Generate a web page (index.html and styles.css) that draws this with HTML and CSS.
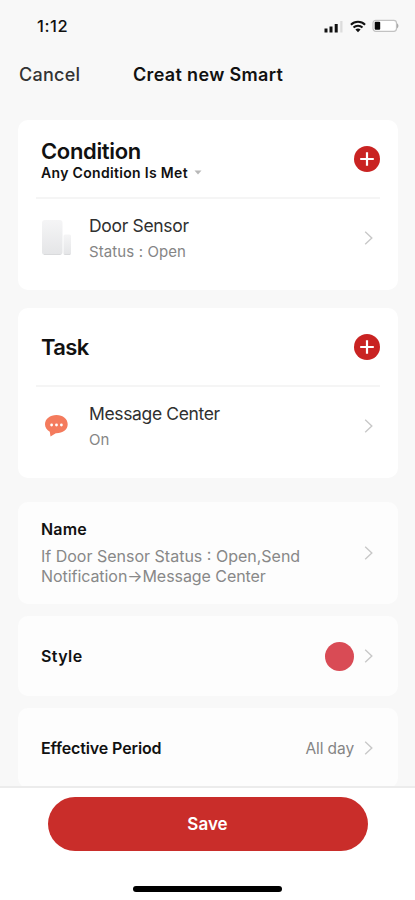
FILE: index.html
```html
<!DOCTYPE html>
<html lang="en">
<head>
<meta charset="utf-8">
<title>Creat new Smart</title>
<link rel="stylesheet" href="styles.css">
</head>
<body>
<svg class="defs" width="0" height="0">
  <symbol id="chevron" viewBox="0 0 10 16"><path d="M1.2 1.8 7.8 8 1.2 14.2" fill="none" stroke="#c8c8c8" stroke-width="1.4"/></symbol>
  <symbol id="plus" viewBox="0 0 26 26"><circle cx="13" cy="13" r="13" fill="#c92322"/><path d="M13 6.2v13.6M6.2 13h13.6" stroke="#fff" stroke-width="2.2"/></symbol>
</svg>
<div class="screen">
  <div class="status">
    <span class="time">1:12</span>
    <div class="indicators">
      <svg width="20" height="14" viewBox="0 0 20 14"><path d="M.5 9.5h3v4h-3zM5.5 7.5h3v6h-3zM10.7 5h3v8.500h-3z" fill="#111"/><path d="M16.200 2h2.300v11.500h-2.300z" fill="#dcdcdc"/></svg>
      <svg width="16" height="13" viewBox="0 0 16 13"><g fill="none" stroke="#111" stroke-width="2"><path d="M.9 4.7a10.2 10.2 0 0 1 14.2 0"/><path d="M3.5 7.5a6.4 6.4 0 0 1 9 0"/></g><path d="M8 12.2 5.4 9.6a3.8 3.8 0 0 1 5.2 0z" fill="#111"/></svg>
      <svg width="28" height="14" viewBox="0 0 28 14"><rect x="1" y="1.3" width="23.5" height="11" rx="2.8" fill="#fff" stroke="#c2c2c2" stroke-width="1.2"/><rect x="2.7" y="2.8" width="5.5" height="8" rx="1" fill="#080808"/><path d="M25.2 4.2q2.4 2.600 0 5.200z" fill="#999"/></svg>
    </div>
  </div>
  <header class="nav">
    <span class="cancel">Cancel</span>
    <span class="title">Creat new Smart</span>
  </header>
  <main class="content">
    <section class="card">
      <div class="card-head">
        <div>
          <h2 class="condition">Condition</h2>
          <div class="match"><span>Any Condition Is Met</span><svg width="8" height="5" viewBox="0 0 8 5"><path d="M.5.5h7L4 4.5z" fill="#b8b8b8"/></svg></div>
        </div>
        <svg class="plus"><use href="#plus"/></svg>
      </div>
      <div class="item">
        <svg class="pic" width="32" height="38" viewBox="0 0 32 38">
          <defs><linearGradient id="body" x2="0" y2="1"><stop stop-color="#f5f5f6"/><stop offset="1" stop-color="#e4e5e7"/></linearGradient></defs>
          <rect x="1" y="1" width="20.500" height="35" rx="3" fill="url(#body)"/><path d="M3 35.5h16.500" stroke="#d9dadc"/>
          <rect x="22.5" y="15.5" width="7.500" height="20.5" rx="1.5" fill="url(#body)"/><path d="M23.5 35.5h5.500" stroke="#d9dadc"/>
        </svg>
        <div class="text"><div class="name door">Door Sensor</div><div class="sub state">Status : Open</div></div>
        <svg class="chev"><use href="#chevron"/></svg>
      </div>
    </section>
    <section class="card task-card">
      <div class="card-head">
        <h2 class="task">Task</h2>
        <svg class="plus"><use href="#plus"/></svg>
      </div>
      <div class="item">
        <svg class="pic" width="32" height="38" viewBox="0 0 32 38"><path d="M15.500 8C9 8 4 12 4 17.300c0 3.300 1.800 5.800 4.800 7.400L9.500 29.500l5.300-3.200C21.600 26.500 26.700 22.700 26.700 17.300 26.700 12 22 8 15.500 8z" fill="#f47b5d"/><g fill="#fff"><circle cx="10.6" cy="18" r="1.4"/><circle cx="15.500" cy="18" r="1.4"/><circle cx="20.400" cy="18" r="1.4"/></g></svg>
        <div class="text"><div class="name message">Message Center</div><div class="sub">On</div></div>
        <svg class="chev"><use href="#chevron"/></svg>
      </div>
    </section>
    <section class="row name-row">
      <div><h3 class="label">Name</h3><p class="desc">If Door Sensor Status : Open,Send<br><span class="second">Notification→Message Center</span></p></div>
      <svg class="chev"><use href="#chevron"/></svg>
    </section>
    <section class="row style-row">
      <h3 class="label style">Style</h3>
      <div class="value"><i class="swatch"></i><svg class="chev"><use href="#chevron"/></svg></div>
    </section>
    <section class="row period-row">
      <h3 class="label period">Effective Period</h3>
      <div class="value"><span class="all-day">All day</span><svg class="chev"><use href="#chevron"/></svg></div>
    </section>
  </main>
  <footer class="footer">
    <button class="save"><span>Save</span></button>
    <div class="home"></div>
  </footer>
</div>
</body>
</html>
```
FILE: styles.css
```css
* { box-sizing: border-box; }
body { margin: 0; font-family: Inter, sans-serif; color: #111; background: #f8f8f8; }
h2, h3, p { margin: 0; font-weight: 600; }
svg { display: block; flex: none; }
.defs { position: absolute; }
.screen { height: 900px; display: flex; flex-direction: column; overflow: hidden; white-space: nowrap; }
.status { height: 52px; flex: none; display: flex; align-items: center; justify-content: space-between; padding: 0 15px 0 37px; }
.time { font-size: 16.5px; font-weight: 500; letter-spacing: .6px; }
.indicators { display: flex; align-items: center; gap: 6px; }
.nav { height: 68px; flex: none; display: flex; padding: 11px 19px 0; line-height: 24px; }
.cancel { width: 114px; font-size: 18px; font-weight: 500; letter-spacing: .25px; color: #333; }
.title { font-size: 18px; font-weight: 600; letter-spacing: .34px; }
.content { flex: 1; min-height: 0; overflow: hidden; padding: 0 17px 0 18px; }
.card { height: 170px; background: #fff; border-radius: 10px; padding: 0 18px; }
.card-head { height: 79px; display: flex; align-items: center; justify-content: space-between; padding: 1px 0 0 5px; border-bottom: 2px solid #f5f5f5; }
.condition, .task { font-size: 22px; line-height: 26px; letter-spacing: -.35px; }
.task { letter-spacing: -.6px; }
.match { display: flex; align-items: center; gap: 6px; font-size: 14px; line-height: 17px; font-weight: 600; letter-spacing: .32px; }
.plus { width: 26px; height: 26px; }
.item { display: flex; align-items: center; height: 78px; padding: 0 6px 0 5px; }
.pic { margin-right: 16px; }
.text { flex: 1; padding-top: 2px; }
.name { font-size: 17.5px; line-height: 26px; color: #303030; letter-spacing: -.32px; }
.message { letter-spacing: -.36px; }
.sub { font-size: 15px; line-height: 26px; color: #858585; }
.state { letter-spacing: .1px; }
.chev { width: 10px; height: 16px; }
.task-card { margin-top: 18px; }
.row { display: flex; align-items: center; justify-content: space-between; padding: 0 24px 0 23px; border-radius: 10px; background: #fdfdfd; }
.label { font-size: 16px; line-height: 20px; letter-spacing: .2px; }
.style { letter-spacing: .4px; }
.period { letter-spacing: -.12px; }
.name-row { margin-top: 24px; height: 102px; }
.desc { margin: 7px 0 1px; font-size: 16px; line-height: 20px; font-weight: 400; color: #888; }
.second { letter-spacing: -.06px; }
.style-row { margin-top: 12px; height: 80px; }
.period-row { margin-top: 12px; height: 80px; }
.value { display: flex; align-items: center; gap: 10px; }
.swatch { width: 29px; height: 29px; border-radius: 50%; background: #d94b55; }
.all-day { font-size: 15.5px; letter-spacing: -.1px; color: #858585; }
.footer { height: 114px; flex: none; background: #fff; border-top: 2px solid #ececec; display: flex; flex-direction: column; align-items: center; }
.save { margin-top: 9px; width: 320px; height: 54px; border: 0; border-radius: 27px; background: #c92d2a; color: #fff; font: 600 17px Inter, sans-serif; }
.home { margin-top: 35px; width: 149px; height: 6px; border-radius: 3px; background: #000; }
```
